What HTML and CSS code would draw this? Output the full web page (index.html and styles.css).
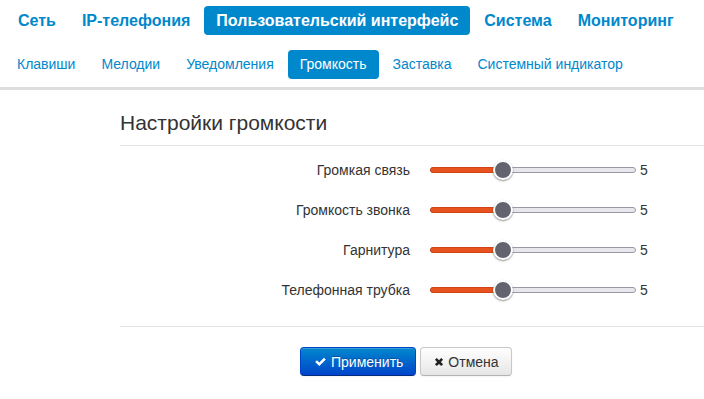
FILE: index.html
```html
<html lang="ru">
<head>
    <meta charset="UTF-8">
    <meta name="viewport" content="width=device-width, initial-scale=1.0">
    <title>Громкость</title>
    <link rel="stylesheet" href="styles.css">
</head>
<body>
    <ul class="nav topnav">
        <li><a href="#">Сеть</a></li>
        <li><a href="#">IP-телефония</a></li>
        <li class="active"><a href="#">Пользовательский интерфейс</a></li>
        <li><a href="#">Система</a></li>
        <li><a href="#">Мониторинг</a></li>
    </ul>
    <ul class="nav subnav">
        <li><a href="#">Клавиши</a></li>
        <li><a href="#">Мелодии</a></li>
        <li><a href="#">Уведомления</a></li>
        <li class="active"><a href="#">Громкость</a></li>
        <li><a href="#">Заставка</a></li>
        <li><a href="#">Системный индикатор</a></li>
    </ul>
    <div class="bar"></div>

    <div class="content">
        <h2>Настройки громкости</h2>

        <div class="rows">
            <div class="row">
                <label>Громкая связь</label>
                <div class="slider"><div class="fill" style="width: 72px"></div><span class="thumb" style="left: 72px"></span></div>
                <span class="val">5</span>
            </div>
            <div class="row">
                <label>Громкость звонка</label>
                <div class="slider"><div class="fill" style="width: 72px"></div><span class="thumb" style="left: 72px"></span></div>
                <span class="val">5</span>
            </div>
            <div class="row">
                <label>Гарнитура</label>
                <div class="slider"><div class="fill" style="width: 72px"></div><span class="thumb" style="left: 72px"></span></div>
                <span class="val">5</span>
            </div>
            <div class="row">
                <label>Телефонная трубка</label>
                <div class="slider"><div class="fill" style="width: 72px"></div><span class="thumb" style="left: 72px"></span></div>
                <span class="val">5</span>
            </div>
        </div>

        <div class="actions">
            <button class="btn btn-primary">
                <svg class="icon" viewBox="0 0 16 16"><path d="M1.5 8.6l2.2-2.2 2.8 2.8 5.8-5.8 2.2 2.2-8 8z" fill="#fff"/></svg>
                Применить
            </button>
            <button class="btn">
                <svg class="icon icon-small" viewBox="0 0 16 16"><path d="M1.5 4.5l3-3 3.5 3.5 3.5-3.5 3 3-3.5 3.5 3.5 3.5-3 3-3.5-3.5-3.5 3.5-3-3 3.5-3.5z" fill="#222"/></svg>
                Отмена
            </button>
        </div>
    </div>
</body>
</html>
```

FILE: styles.css
```css
* {
  box-sizing: border-box;
}

body {
  margin: 0;
  font-family: "Liberation Sans", Arial, sans-serif;
  color: #333;
  background: #fff;
}

.nav {
  list-style: none;
  margin: 0;
  padding: 0 0 0 5px;
  display: flex;
}

.nav li {
  margin-right: 2px;
}

.nav a {
  display: block;
  padding: 5px 12px;
  line-height: 19px;
  color: #0088cc;
  text-decoration: none;
  border-radius: 4px;
  white-space: nowrap;
}

.nav .active a {
  background-color: #0088cc;
  color: #fff;
}

.topnav {
  margin-top: 6px;
  padding-left: 6px;
  font-size: 16px;
  font-weight: bold;
}

.subnav {
  margin-top: 15px;
  font-size: 14px;
}

.bar {
  height: 3px;
  margin-top: 8px;
  background-color: #ddd;
}

.content {
  margin-left: 120px;
}

h2 {
  margin: 20px 0 0 0;
  padding-bottom: 10px;
  font-size: 21px;
  line-height: 25px;
  font-weight: normal;
  color: #333;
  border-bottom: 1px solid #e5e5e5;
}

.rows {
  padding: 4px 0 16px 0;
  border-bottom: 1px solid #e5e5e5;
}

.row {
  display: flex;
  align-items: center;
  height: 40px;
  font-size: 14px;
}

.row label {
  width: 290px;
  text-align: right;
  margin-right: 20px;
}

.slider {
  position: relative;
  width: 206px;
  height: 6px;
  border: 1px solid #9a9aa6;
  border-radius: 3px;
  background-color: #e8e8ec;
}

.slider .fill {
  height: 6px;
  margin: -1px 0 0 -1px;
  border-radius: 3px 0 0 3px;
  background-color: #e8531d;
  border: 1px solid #cf4516;
}

.slider .thumb {
  position: absolute;
  top: -8px;
  width: 20px;
  height: 20px;
  margin-left: -10px;
  border-radius: 50%;
  background-color: #63636f;
  border: 2px solid #fff;
  box-shadow: 0 1px 2px rgba(0, 0, 0, 0.45);
}

.val {
  margin-left: 4px;
}

.actions {
  display: flex;
  gap: 4px;
  margin: 20px 0 0 180px;
}

.btn {
  display: inline-flex;
  align-items: center;
  height: 29px;
  padding: 0 12px 0 13px;
  font-family: inherit;
  font-size: 14px;
  color: #333;
  border: 1px solid #c8c8c8;
  border-bottom-color: #b3b3b3;
  border-radius: 4px;
  background-image: linear-gradient(#ffffff, #e6e6e6);
  box-shadow: inset 0 1px 0 rgba(255, 255, 255, 0.2), 0 1px 2px rgba(0, 0, 0, 0.05);
  cursor: pointer;
}

.btn-primary {
  color: #fff;
  border-color: #0044cc #0044cc #002a80;
  background-image: linear-gradient(#0088cc, #0044cc);
  text-shadow: 0 -1px 0 rgba(0, 0, 0, 0.25);
}

.icon {
  width: 13px;
  height: 13px;
  margin-right: 4px;
}

.icon-small {
  width: 10px;
  height: 10px;
}
```
